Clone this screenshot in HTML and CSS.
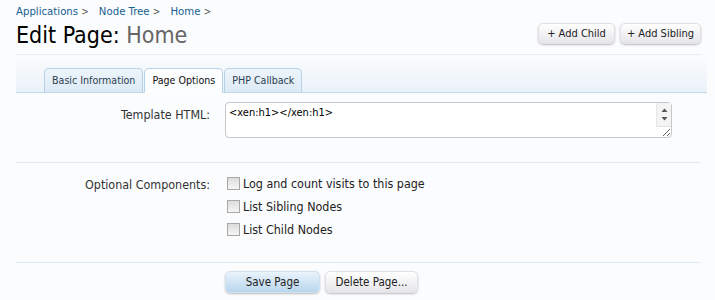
FILE: index.html
```html
<!DOCTYPE html>
<html>
<head>
<meta charset="utf-8">
<link rel="stylesheet" href="styles.css">
</head>
<body>
<div class="page">
  <div class="head">
    <div class="head-left">
      <nav class="crumbs">
        <a class="crumb">Applications <span class="arrow">&gt;</span></a>
        <a class="crumb">Node Tree <span class="arrow">&gt;</span></a>
        <a class="crumb">Home <span class="arrow">&gt;</span></a>
      </nav>
      <h1 class="title">Edit Page: <span class="title-sub">Home</span></h1>
    </div>
    <div class="top-ctrls">
      <a class="btn small">+ Add Child</a>
      <a class="btn small">+ Add Sibling</a>
    </div>
  </div>
  <div class="tabbar">
    <ul class="tabs">
      <li class="tab">Basic Information</li>
      <li class="tab active">Page Options</li>
      <li class="tab">PHP Callback</li>
    </ul>
  </div>
  <div class="form">
    <div class="row">
      <label class="lbl">Template HTML:</label>
      <div class="ctrl tawrap">
        <textarea class="tarea">&lt;xen:h1&gt;&lt;/xen:h1&gt;</textarea>
        <div class="fakebar">
          <svg width="15" height="24" viewBox="0 0 15 24"><path d="M4.5 9 L7.5 5.5 L10.5 9 Z" fill="#555"/><path d="M4.5 14 L7.5 17.5 L10.5 14 Z" fill="#555"/></svg>
        </div>
      </div>
    </div>
    <div class="sep"></div>
    <div class="row">
      <label class="lbl lbl-chk">Optional Components:</label>
      <ul class="ctrl checks">
        <li><label class="chk"><span class="box"></span>Log and count visits to this page</label></li>
        <li><label class="chk"><span class="box"></span>List Sibling Nodes</label></li>
        <li><label class="chk"><span class="box"></span>List Child Nodes</label></li>
      </ul>
    </div>
    <div class="sep sep2"></div>
    <div class="submit">
      <a class="btn primary">Save Page</a>
      <a class="btn">Delete Page...</a>
    </div>
  </div>
</div>
</body>
</html>
```
FILE: styles.css
```css
* { box-sizing: border-box; }
html, body { margin: 0; padding: 0; }
body {
  background: #fbfcfd;
  font-family: "DejaVu Sans Condensed", "DejaVu Sans", sans-serif;
  color: #222;
  width: 715px;
  height: 300px;
  overflow: hidden;
}
.page { padding: 0 8px 0 16px; }
.head {
  display: flex;
  justify-content: space-between;
  align-items: flex-end;
  border-bottom: 1px solid #e3edf5;
  height: 55px;
  margin-right: 6px;
}
.crumbs { display: flex; gap: 10px; font-size: 11.3px; padding-top: 5px; height: 21px; }
.crumb { color: #176093; }
.arrow { color: #555; font-size: 10px; }
.title {
  margin: 0;
  font-weight: normal;
  font-size: 23px;
  line-height: 29px;
  color: #000;
  padding-bottom: 4px;
}
.title-sub { color: #666; }
.top-ctrls { display: flex; gap: 5px; padding-bottom: 10px; }
.btn {
  display: inline-block;
  font-size: 11px;
  color: #222;
  border-radius: 5px;
  background: linear-gradient(#ffffff, #e6e6ea);
  border: 1px solid #e2e2e6;
  box-shadow: 0 1px 2px rgba(0,0,0,0.25);
  text-align: center;
}
.btn.small { height: 21px; line-height: 19px; padding: 0 6px; }
.top-ctrls .btn:first-child { padding: 0 8px; }
.tabbar {
  height: 38px;
  background: linear-gradient(#fbfcfd, #eaf2f9);
  border-bottom: 1px solid #c3d9ea;
  display: flex;
  align-items: flex-end;
  padding-left: 28px;
}
.tabs { list-style: none; margin: 0 0 -1px; padding: 0; display: flex; gap: 1px; }
.tab {
  font-size: 10.6px;
  color: #2b3e4e;
  height: 25px;
  line-height: 23px;
  padding: 0 7px;
  border: 1px solid #b7d2e6;
  border-bottom-color: #c3d9ea;
  border-radius: 5px 5px 0 0;
  background: linear-gradient(#eef5fb, #dce9f5);
}
.tab.active {
  background: #fcfdfe;
  border-bottom-color: #fcfdfe;
  color: #111;
}
.form { padding-top: 9px; }
.row { display: flex; }
.lbl {
  width: 194px;
  text-align: right;
  font-size: 12.4px;
  color: #333;
  padding-top: 5px;
  flex: none;
}
.ctrl { margin-left: 15px; }
.tawrap { position: relative; }
.tarea {
  display: block;
  width: 447px;
  height: 36px;
  resize: vertical;
  font-family: "DejaVu Sans Condensed", "DejaVu Sans", sans-serif;
  font-size: 11px;
  color: #000;
  padding: 3px 3px;
  border: 1px solid #c8c8c8;
  border-radius: 4px;
  background: #fff;
  overflow: hidden;
}
.fakebar {
  position: absolute;
  right: 1px;
  top: 1px;
  width: 15px;
  height: 24px;
  background: #f4f4f4;
  border-left: 1px solid #e6e6e6;
  border-bottom: 1px solid #e0e0e0;
}
.fakebar svg { display: block; }
.sep { height: 1px; background: #dcebf5; margin: 24px 6px 0 0; }
.form .sep + .row { padding-top: 12px; }
.lbl-chk { padding-top: 2px; }
.checks { list-style: none; padding: 0; margin-top: 0; margin-bottom: 0; display: flex; flex-direction: column; gap: 6px; }
.chk { display: flex; align-items: center; font-size: 12.4px; color: #222; height: 17px; }
.box {
  width: 13px; height: 13px;
  border: 1px solid #a8a8a8;
  background: linear-gradient(#dcdcdc, #f6f6f6);
  margin: 0 3px 0 2px;
}
.sep2 { margin-top: 24px; }
.submit { display: flex; gap: 5px; padding: 8px 0 0 209px; }
.btn.primary {
  background: linear-gradient(#eaf3fb, #b9d6ee);
  border-color: #cfe0ef;
}
.submit .btn { height: 22px; line-height: 20px; padding: 0 0; width: 95px; font-size: 11.5px; }
.submit .btn + .btn { width: 93px; }
```
